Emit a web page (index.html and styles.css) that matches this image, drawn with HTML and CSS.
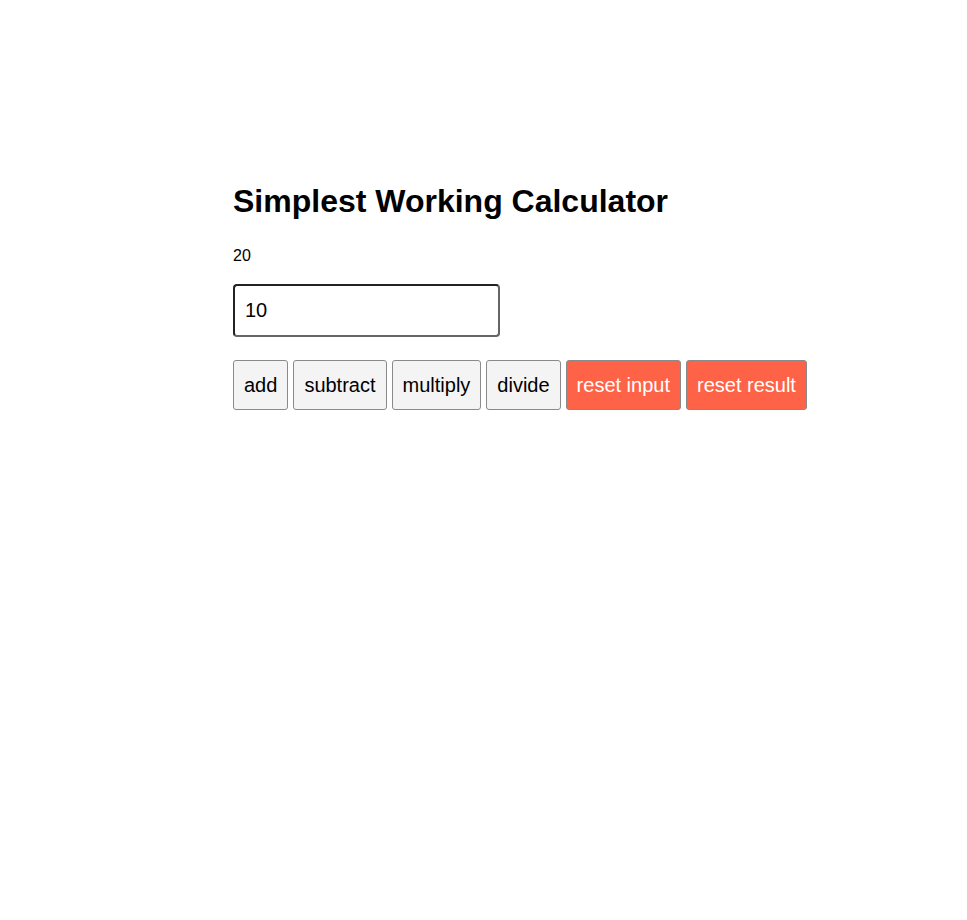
FILE: index.html
```html
<!DOCTYPE html>
<html>
<head>
<meta charset="utf-8">
<title>Simplest Working Calculator</title>
<link rel="stylesheet" href="styles.css">
</head>
<body>
<main class="calc">
  <h1 class="title">Simplest Working Calculator</h1>
  <p class="result">20</p>
  <form class="form">
    <input class="number-input" type="number" value="10">
    <div class="buttons">
      <button type="button" class="btn">add</button>
      <button type="button" class="btn">subtract</button>
      <button type="button" class="btn">multiply</button>
      <button type="button" class="btn">divide</button>
      <button type="button" class="btn btn-red">reset input</button>
      <button type="button" class="btn btn-red">reset result</button>
    </div>
  </form>
</main>
</body>
</html>
```

FILE: styles.css
```css
html, body {
  margin: 0;
  padding: 0;
  background: #fff;
}
body {
  font-family: "Liberation Sans", Arial, sans-serif;
  color: #000;
}
.calc {
  width: 501px;
  margin: 0 auto;
  padding-top: 163px;
}
.title {
  font-size: 32px;
  font-weight: bold;
  margin: 20px 0 0;
  line-height: 37px;
}
.result {
  font-size: 16px;
  margin: 27px 0 0;
  line-height: 18px;
}
.form {
  margin-top: 19px;
}
.number-input {
  display: block;
  box-sizing: border-box;
  width: 267px;
  height: 53px;
  font-family: "Liberation Sans", Arial, sans-serif;
  font-size: 20px;
  padding: 0 10px;
  border: 2px solid #222;
  border-bottom-color: #666;
  border-right-color: #666;
  border-radius: 4px;
  margin: 0;
  outline: none;
}
.number-input::-webkit-inner-spin-button,
.number-input::-webkit-outer-spin-button {
  -webkit-appearance: none;
  margin: 0;
}
.buttons {
  display: flex;
  gap: 5px;
  margin-top: 23px;
  white-space: nowrap;
}
.btn {
  flex: none;
  box-sizing: border-box;
  height: 50px;
  padding: 0 10px;
  font-family: "Liberation Sans", Arial, sans-serif;
  font-size: 20px;
  color: #000;
  background: #f4f4f4;
  border: 1px solid #8a8a8a;
  border-radius: 3px;
  margin: 0;
}
.btn-red {
  background: #ff6347;
  color: #fff;
}
```
